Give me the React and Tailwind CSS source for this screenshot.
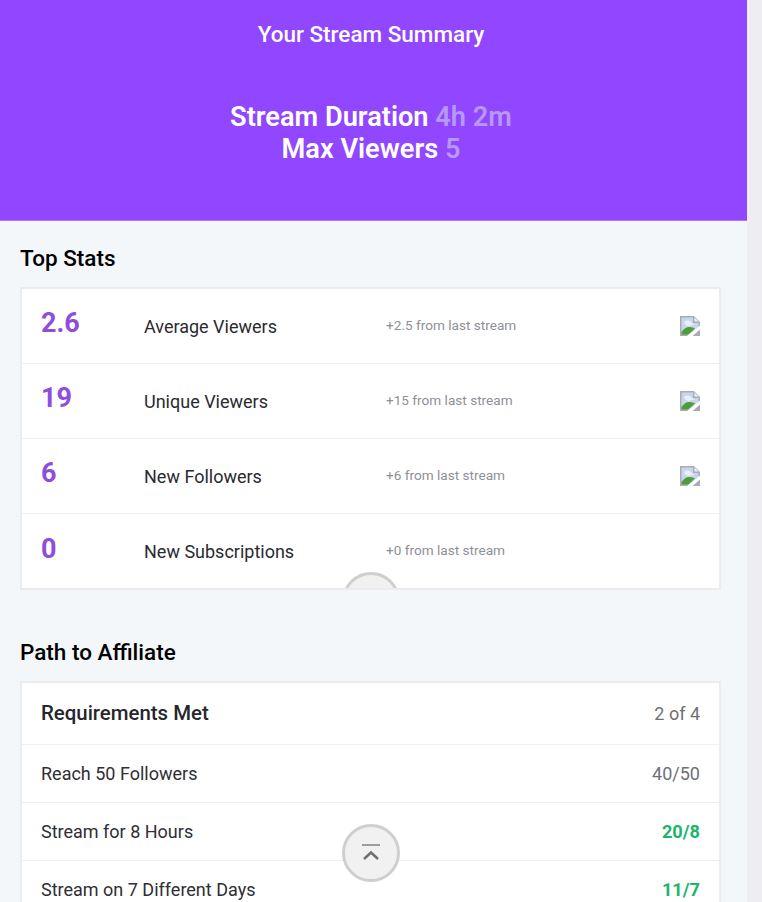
import React from "react";

const font = { fontFamily: "Roboto, sans-serif" };

function BrokenImage() {
  return (
    <svg width="20" height="20" viewBox="0 0 20 20" className="block">
      <path d="M0 0H14L20 6V20H0Z" fill="#a9adb3" />
      <path d="M1.5 1.5H13V7H18.5V12L1.5 18.5Z" fill="#c6d6ee" />
      <path d="M4 6C6 4 9 4 11 6C12 7.5 13 8 15 8.5L8 10C6 9 4 8 4 6Z" fill="#e9f0fa" />
      <path d="M14 1V6H19" fill="#eef0f3" stroke="#a9adb3" strokeWidth="1" />
      <path d="M1.5 18.5V16C4 12.5 7 10.5 10 11C12 11.3 13.5 11.8 15 12.2L8 18.5Z" fill="#4f9e35" />
      <path d="M7 20L20 9.5V13.5L12.5 20Z" fill="#ffffff" />
    </svg>
  );
}

function StatRow({ value, label, delta, icon, last }) {
  return (
    <div className={`flex items-center h-[75px] pl-[19px] pr-[19px] ${last ? "" : "border-b border-[#f0f0f2]"}`}>
      <div className="w-[103px] text-[27px] leading-none font-bold text-[#8f4ddc] -mt-[5px]">{value}</div>
      <div className="w-[242px] text-[18px] text-[#2a2a30]">{label}</div>
      <div className="flex-1 text-[13.6px] text-[#8f8f98] -mt-[2px]">{delta}</div>
      {icon ? <BrokenImage /> : null}
    </div>
  );
}

function ReqRow({ label, value, met, header }) {
  return (
    <div className={`flex items-center justify-between pl-[19px] pr-[19px] border-b border-[#f0f0f2] ${header ? "h-[62px]" : "h-[58px]"}`}>
      <span className={header ? "text-[20.4px] font-medium text-[#26262c] -mt-[1px]" : "text-[18px] text-[#2e2e34]"}>{label}</span>
      <span className={met ? "text-[18.2px] font-bold text-[#1db56c]" : "text-[18px] text-[#6f6f76]"}>{value}</span>
    </div>
  );
}

function UpButton({ className }) {
  return (
    <div className={`w-[58px] h-[58px] rounded-full border-[3px] border-[#cfcfcf] bg-[#f1f1f1] flex items-center justify-center ${className}`}>
      <svg width="20" height="20" viewBox="0 0 20 20" fill="none" stroke="#8a8a8a" strokeWidth="1.6">
        <path d="M1 2H19" />
        <path d="M3 16L10 9.5L17 16" stroke="#6f6f6f" strokeWidth="2.4" />
      </svg>
    </div>
  );
}

export default function App() {
  return (
    <div className="relative flex h-[902px] overflow-hidden bg-[#eeeef2]" style={font}>
      <main className="w-[747px] shrink-0 bg-[#f4f7fa]">
        <header className="h-[221px] bg-[#9146ff] border-b border-[#b573ee] text-center text-white pt-[20px] pr-[5px]">
          <h1 className="text-[22.5px] leading-[29px] font-medium">Your Stream Summary</h1>
          <div className="mt-[52px] text-[27.2px] leading-[32px] font-semibold">
            <p>Stream Duration <span className="text-[#b798f5]">4h 2m</span></p>
            <p>Max Viewers <span className="text-[#b798f5]">5</span></p>
          </div>
        </header>

        <section className="pl-[20px] pr-[26px]">
          <h2 className="mt-[23px] text-[22.5px] leading-[29px] font-medium text-black">Top Stats</h2>
          <div className="relative mt-[14px] h-[303px] overflow-hidden bg-white border-2 border-[#ececee]">
            <StatRow value="2.6" label="Average Viewers" delta="+2.5 from last stream" icon />
            <StatRow value="19" label="Unique Viewers" delta="+15 from last stream" icon />
            <StatRow value="6" label="New Followers" delta="+6 from last stream" icon />
            <StatRow value="0" label="New Subscriptions" delta="+0 from last stream" last />
            <UpButton className="absolute left-[320px] top-[283px]" />
          </div>

          <h2 className="mt-[48px] text-[22.5px] leading-[29px] font-medium text-black">Path to Affiliate</h2>
          <div className="mt-[14px] bg-white border-2 border-b-0 border-[#ececee]">
            <ReqRow header label="Requirements Met" value="2 of 4" />
            <ReqRow label="Reach 50 Followers" value="40/50" />
            <ReqRow label="Stream for 8 Hours" value="20/8" met />
            <ReqRow label="Stream on 7 Different Days" value="11/7" met />
          </div>
        </section>
      </main>
      <UpButton className="absolute left-[342px] top-[824px]" />
    </div>
  );
}
